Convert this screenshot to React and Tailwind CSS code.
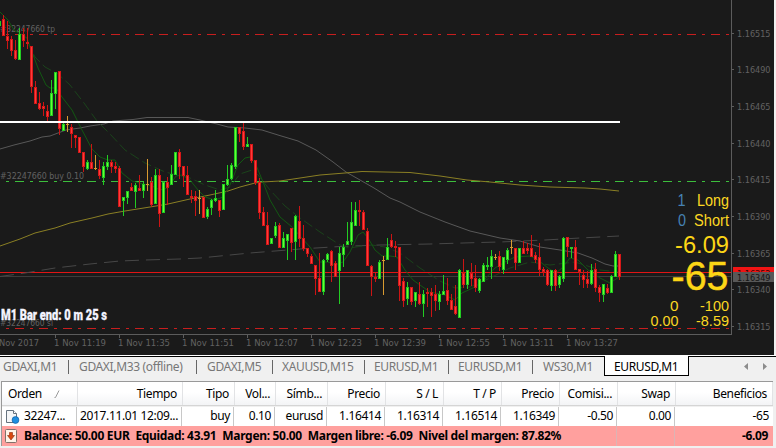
import { clsx } from 'clsx'

// high, body top, body bottom, low, direction (g = up, r = down, o = doji)
const CANDLES = `21 21 26 26 g|15 19 36 36 r|21 36 41 49 r|36 39 51 56 r|40 50 59 60 r|28 34 60 60 g|28 34 41 47 r|28 42 44 49 r|46 46 87 93 r
81 87 104 104 r|92 103 109 110 r|102 106 109 116 r|105 111 117 121 r|80 93 116 116 g|72 72 94 109 g|71 71 129 135 r|122 124 131 131 g
116 124 125 132 o|124 127 134 148 r|135 135 138 148 r|137 137 153 153 r|152 152 167 172 r|160 162 169 170 g|144 162 169 169 r|155 168 169 170 o
160 169 176 179 r|162 166 178 185 g|155 162 167 170 g|160 162 167 173 r|162 166 169 173 r|166 168 207 207 r|197 197 201 216 g|191 191 198 204 g
183 187 191 191 r|183 185 192 208 g|175 188 191 191 r|182 184 191 198 g|159 184 185 191 o|177 182 205 207 r|169 175 204 204 g|169 175 214 227 r
181 182 213 213 g|177 182 188 205 r|165 174 185 185 g|152 152 175 175 g|149 152 167 179 r|166 166 176 187 r|166 175 195 195 r|190 196 198 203 r
191 196 201 216 r|190 198 199 214 o|197 197 218 218 r|207 209 217 219 g|199 200 208 215 g|190 198 201 202 g|200 200 211 217 r|184 184 210 210 g
165 179 185 186 g|163 165 179 180 g|127 127 167 169 g|127 127 134 142 r|122 131 147 150 r|137 144 147 147 g|144 144 161 163 r|160 160 183 185 r
178 182 213 219 r|207 212 226 226 r|212 225 245 245 r|238 238 244 244 g|222 226 236 238 g|223 225 248 248 r|232 238 248 248 g|234 234 241 260 g
228 228 243 252 r|215 216 242 260 g|206 221 239 247 r|225 238 249 251 r|248 248 254 257 r|254 256 264 264 r|265 265 279 295 r|253 278 292 292 r
259 260 292 295 g|253 254 260 262 g|250 251 266 282 r|261 263 277 277 r|247 253 271 304 g|244 247 255 267 g|222 241 245 245 g|202 222 242 245 g
202 210 226 226 g|200 210 212 226 r|210 212 230 230 r|228 231 266 266 r|265 266 277 296 r|273 277 279 282 r|260 262 279 279 g|256 260 261 295 o
238 247 260 260 g|234 240 247 248 r|241 246 248 257 r|247 247 286 301 r|278 281 301 307 r|282 287 299 305 g|287 287 302 305 r|292 292 301 307 g
282 294 304 305 r|290 294 304 317 g|288 292 294 307 r|288 292 296 317 r|285 294 301 311 r|291 294 302 310 g|275 291 295 295 g|278 290 301 305 r
294 300 310 310 r|285 306 314 315 r|269 270 318 318 g|259 273 285 288 r|270 270 285 289 g|263 273 279 286 r|265 278 288 292 r|278 279 291 293 g
263 265 282 282 g|257 265 267 270 g|250 256 267 279 g|254 257 258 260 o|251 256 267 271 r|257 257 270 274 g|248 250 260 264 g|240 247 248 254 o
248 248 263 270 r|248 248 263 263 g|241 248 254 254 r|243 248 251 254 r|235 248 257 257 r|252 255 260 263 r|243 257 270 276 r|267 269 272 276 r
269 270 285 286 r|270 270 286 291 g|269 270 286 291 r|275 276 285 288 g|237 238 279 282 g|237 237 247 257 r|247 247 249 258 g|240 247 270 270 r
269 269 272 285 r|270 275 280 288 r|271 279 284 288 r|264 270 284 285 g|263 269 288 292 r|285 287 293 302 r|284 284 295 302 g|284 288 293 294 r
275 276 293 293 g|251 254 277 277 g|254 254 277 280 r`
  .split(/[|\n]/)
  .map((row) => row.split(' '))

const COLORS = {
  g: { wick: '#22cc22', edge: '#22cc22', body: '#66ff33' },
  r: { wick: '#cc1414', edge: '#d81818', body: '#ff3b3b' },
  o: { wick: '#d89a30', edge: '#d89a30', body: '#d89a30' },
}

const MA_GRAY = '0,149 14,145 30,141 42,137 50,136 58,133 66,130 80,128 90,126 104,124 113,121 133,119.5 147,117.5 188,117.5 200,120 208,122 217,124 228,127 245,128 262,130 278,135 298,141 316,150 333,162 346,172 360,180 374,188 390,198 400,202 420,212 445,222 470,231 500,238 520,241 540,247 560,250 578,253 592,258 605,264 613,266 620,266'
const MA_YELLOW = '0,246 20,239 35,233 55,228 70,223 92,218 108,214 125,211 150,207 168,204 190,199 210,195 228,191 240,187 255,183 262,182 280,181 300,178 320,175 345,173 362,171.5 385,172 410,172.5 440,176 467,180 490,182 520,185 550,187 585,188 600,189 619,191'
const MA_LONG = '0,276.5 25,273 55,268 90,264 120,261 145,260 180,259 200,258 220,256 250,253 275,251 300,249 340,246.5 380,245 430,244 480,242.5 500,242 545,240 580,238 600,237 619,236'
const MA_GREEN = '0,12 8,20 14,30 27,38 32,52 38,68 46,85 50,88 56,88 62,97 72,110 82,130 92,149 100,157 108,160 115,160 122,173 132,181 143,184 152,186 160,190 168,188 176,176 182,175 190,180 198,190 205,197 215,200 223,197 230,185 238,165 245,158 250,157 256,165 263,182 270,200 280,217 292,227 300,236 310,247 320,262 328,262 335,265 343,262 350,252 358,235 363,232 368,238 375,250 382,256 390,256 397,257 405,270 413,280 420,285 430,292 445,295 455,300 462,293 475,287 485,279 495,268 505,262 515,257 530,256 538,260 548,268 556,273 562,268 570,258 578,260 588,270 600,278 610,283 619,277'
const MA_GREEN_SLOW = '27,42 35,57 45,67 58,74 70,85 84,103 97,121 110,134 125,150 145,163 165,172 190,178 205,185 220,190 230,187 240,174 252,170 258,175 270,190 285,206 300,218 320,232 340,245 350,248 362,246 372,245 385,247 400,253 420,268 440,281 455,288 470,287 490,278 510,268 530,262 550,265 575,262 600,270 619,272'

const PRICES = [
  ['1.16515', 33], ['1.16490', 69], ['1.16465', 106], ['1.16440', 143], ['1.16415', 179],
  ['1.16390', 216], ['1.16365', 253], ['1.16340', 289], ['1.16315', 326],
]

const TIMES = ['11:19', '11:35', '11:51', '12:07', '12:23', '12:39', '12:55', '13:11', '13:27']

const LEVELS = [
  { y: 34, color: '#c81e1e', label: '#32247660 tp', width: 55 },
  { y: 181, color: '#3cbe3c', label: '#32247660 buy 0.10', width: 84 },
  { y: 328, color: '#c81e1e', label: '#32247660 sl', width: 53 },
]

// text, right edge, baseline, size, width, color
const PANEL = [
  ['1', 685.5, 206, 16, 8, '#4682b4'],
  ['Long', 729, 206, 16, 32, '#fcd722'],
  ['0', 686, 226, 16, 8, '#4682b4'],
  ['Short', 729, 226, 16, 35, '#fcd722'],
  ['-6.09', 729, 252.5, 23.5, 54, '#fcd616'],
  ['-65', 728.5, 289.5, 40, 57, '#fcd616'],
  ['0', 678.5, 311, 15.5, 8.5, '#fcd722'],
  ['-100', 729, 311, 15.5, 29, '#fcd722'],
  ['0.00', 678.5, 326, 15.5, 28, '#fcd722'],
  ['-8.59', 729, 326, 15.5, 33, '#fcd722'],
]

function Label({ x, y, w, fill = '#626262', children }) {
  return (
    <text x={x} y={y} fill={fill} textLength={w} lengthAdjust="spacingAndGlyphs" className="font-['DejaVu_Sans',sans-serif] text-[9px]">
      {children}
    </text>
  )
}

function Candle({ index, data }) {
  const [high, top, bottom, low, type] = data
  const x = 4 * index - 1
  const c = COLORS[type]
  const height = Math.max(bottom - top, 1)
  return (
    <g>
      <rect x={x} y={high} width="1" height={low - high} fill={c.wick} />
      <rect x={x - 1} y={top} width="3" height={height} fill={c.edge} />
      {height > 2 && <rect x={x} y={+top + 1} width="1" height={height - 2} fill={c.body} />}
    </g>
  )
}

function Chart() {
  return (
    <svg width="774" height="355" viewBox="0 0 774 355" className="block shrink-0 bg-[#1a1a1a]">
      {LEVELS.map((l) => (
        <g key={l.y}>
          <Label x={0} y={l.y - 2} w={l.width}>{l.label}</Label>
          <line x1="-9" x2="731" y1={l.y + 0.5} y2={l.y + 0.5} stroke={l.color} strokeDasharray="9 6 3 6" />
        </g>
      ))}
      <rect x="0" y="276" width="731" height="1" fill="#3c3c3c" />
      <rect x="0" y="272" width="731" height="1" fill="#e01414" />
      <g fill="none" strokeWidth="1">
        <polyline points={MA_LONG} stroke="#474747" strokeDasharray="14 7" />
        <polyline points={MA_GRAY} stroke="#585858" />
        <polyline points={MA_YELLOW} stroke="#8a7f24" />
        <polyline points={MA_GREEN_SLOW} stroke="#1b431b" strokeDasharray="10 4" />
        <polyline points={MA_GREEN} stroke="#125812" />
      </g>
      {CANDLES.map((c, i) => <Candle key={i} index={i} data={c} />)}
      <rect x="0" y="121" width="620" height="2" fill="#fff" />

      <g fill="#5c5c5c">
        <rect x="731" y="0" width="1" height="335" />
        <rect x="0" y="334" width="732" height="1" />
        {PRICES.map(([p, y]) => <rect key={p} x="732" y={y} width="2" height="1" />)}
        {TIMES.map((t, i) => <rect key={t} x={55 + i * 64} y="335" width="1" height="3" />)}
      </g>
      {PRICES.map(([p, y]) => <Label key={p} x={737} y={y + 4} w={33.5}>{p}</Label>)}
      <Label x={-1} y={346} w={40}>Nov 2017</Label>
      {TIMES.map((t, i) => <Label key={t} x={54 + i * 64} y={346} w={52}>{`1 Nov ${t}`}</Label>)}

      <rect x="733" y="267" width="41" height="6" fill="#f01414" />
      <Label x={737} y={276.5} w={33.5} fill="#3a0808">1.16352</Label>
      <rect x="733" y="272" width="41" height="10" fill="#585858" />
      <Label x={737} y={280.5} w={33.5} fill="#141414">1.16349</Label>

      {PANEL.map(([text, x, y, size, width, color], i) => (
        <text
          key={i}
          x={x - width}
          y={y}
          fill={color}
          fontSize={size}
          textLength={width}
          lengthAdjust="spacingAndGlyphs"
          stroke={size === 40 ? color : 'none'}
          strokeWidth="0.5"
          className="font-['Liberation_Sans',sans-serif]"
        >
          {text}
        </text>
      ))}
      <text x="1" y="319.5" fill="#f4f4ff" stroke="#f4f4ff" strokeWidth="0.3" textLength="106" lengthAdjust="spacingAndGlyphs" className="font-[Roboto,sans-serif] text-[14px] font-black">
        M1 Bar end: 0 m 25 s
      </text>
    </svg>
  )
}

const TABS = [
  { name: 'GDAXI,M1', box: 'w-[69px] pl-[3px]' },
  { name: 'GDAXI,M33 (offline)', box: 'w-[128px] pl-2.5' },
  { name: 'GDAXI,M5', box: 'w-[76px] pl-2.5' },
  { name: 'XAUUSD,M15', box: 'w-[92px] pl-[9px]' },
  { name: 'EURUSD,M1', box: 'w-[84px] pl-[9px]' },
  { name: 'EURUSD,M1', box: 'w-[84px] pl-[9px]' },
  { name: 'WS30,M1', box: 'w-[71px] pl-2.5' },
]

function Tabs() {
  return (
    <div className="flex h-[26px] shrink-0 border-t border-white">
      <div className="flex h-[22px] flex-1 border-t border-black text-[12px] text-[#777] tracking-[-0.35px]">
        {TABS.map((t, i) => (
          <div key={i} className={clsx('relative shrink-0 whitespace-nowrap pt-px leading-[17px]', t.box)}>
            {t.name}
            {i < TABS.length - 1 && <span className="absolute right-0 top-[3px] h-3.5 w-px bg-[#666]" />}
          </div>
        ))}
        <div className="-mt-px h-5 w-[85px] border-x border-b border-black bg-white pl-[9px] pt-0.5 leading-[17px] text-black">
          EURUSD,M1
        </div>
        <svg width="24" height="8" className="ml-[54px] mt-1.5" fill="#8c8c8c">
          <path d="M5 0v7L1 3.5zM20 0v7l4-3.5z" />
        </svg>
      </div>
    </div>
  )
}

const COLUMNS = [
  { title: 'Orden', value: '32247...' },
  { title: 'Tiempo', value: '2017.11.01 12:09...' },
  { title: 'Tipo', value: 'buy' },
  { title: 'Vol...', value: '0.10' },
  { title: 'Símb...', value: 'eurusd' },
  { title: 'Precio', value: '1.16414' },
  { title: 'S / L', value: '1.16314' },
  { title: 'T / P', value: '1.16514' },
  { title: 'Precio', value: '1.16349' },
  { title: 'Comisi...', value: '-0.50' },
  { title: 'Swap', value: '0.00' },
  { title: 'Beneficios', value: '-65' },
]

const GRID = 'grid grid-cols-[76px_105px_52px_41px_52px_58px_58px_58px_58px_58px_58px_97px] whitespace-nowrap'

function Terminal() {
  return (
    <div className="ml-px w-[772px] border-l border-t border-[#999] bg-white text-[12px] text-black tracking-[-0.36px]">
      <div className={clsx(GRID, 'h-[23px] bg-gradient-to-b from-white from-45% to-[#f3f4f6] leading-[23px]')}>
        {COLUMNS.map((c, i) => (
          <div key={i} className={clsx('border-r border-[#e2e3e5]', i === 0 ? 'flex pl-1.5' : 'pr-[5px] text-right')}>
            {c.title}
            {i === 0 && (
              <svg width="6" height="8" className="ml-3 mt-2" stroke="#999" fill="none"><path d="M.5 7.5h1L5 .5" /></svg>
            )}
          </div>
        ))}
      </div>
      <div className="h-0.5 border-t border-[#d5d5d5] bg-[#f0f0f0]" />
      <div className={clsx(GRID, 'h-[19px] leading-[18px]')}>
        {COLUMNS.map((c, i) => (
          <div key={i} className={clsx('mr-px', i < 11 && 'border-r border-[#c8c8c8]', i === 0 ? 'flex pl-[3px]' : 'pr-[3px] text-right')}>
            {i === 0 && (
              <svg width="15" height="15" viewBox="0 0 15 15" className="mr-1 mt-0.5 shrink-0">
                <path d="M1.5 1.5h7l3 3v9h-10z" fill="#f5f6f7" stroke="#66727e" />
                <path d="M8.5 1.5v3h3" fill="#fff" stroke="#66727e" />
                <circle cx="10.5" cy="11" r="3.4" fill="#1f8fe0" stroke="#0d5fa8" strokeWidth=".7" />
              </svg>
            )}
            {c.value}
          </div>
        ))}
      </div>
      <div className="flex h-5 w-[771px] bg-[#ffa09e] font-bold leading-5">
        <div className="flex w-[615px] shrink-0 gap-[7px] border-r border-[#dcb4b4] pl-[3px] tracking-[-0.32px]">
          <svg width="12" height="14" viewBox="0 0 12 14" className="mt-[3px] shrink-0">
            <rect x=".5" y=".5" width="11" height="13" rx="1" fill="#fff3e8" stroke="#80716b" />
            <path d="M4.5 3.5h3v3h2L6 11 2.5 6.5h2z" fill="#d9480f" stroke="#8f2606" strokeWidth=".6" />
          </svg>
          <span className="flex whitespace-nowrap gap-1.5">
            <span>Balance: 50.00 EUR</span>
            <span>Equidad: 43.91</span>
            <span>Margen: 50.00</span>
            <span>Margen libre: -6.09</span>
            <span>Nivel del margen: 87.82%</span>
          </span>
        </div>
        <div className="w-[58px] shrink-0 border-r border-[#dcb4b4]" />
        <div className="flex-1 pr-[5px] text-right">-6.09</div>
      </div>
    </div>
  )
}

export default function App() {
  return (
    <div className="flex h-[448px] w-[776px] flex-col overflow-hidden bg-[#f0f0f0] font-['Noto_Sans',sans-serif]">
      <Chart />
      <Tabs />
      <Terminal />
    </div>
  )
}
